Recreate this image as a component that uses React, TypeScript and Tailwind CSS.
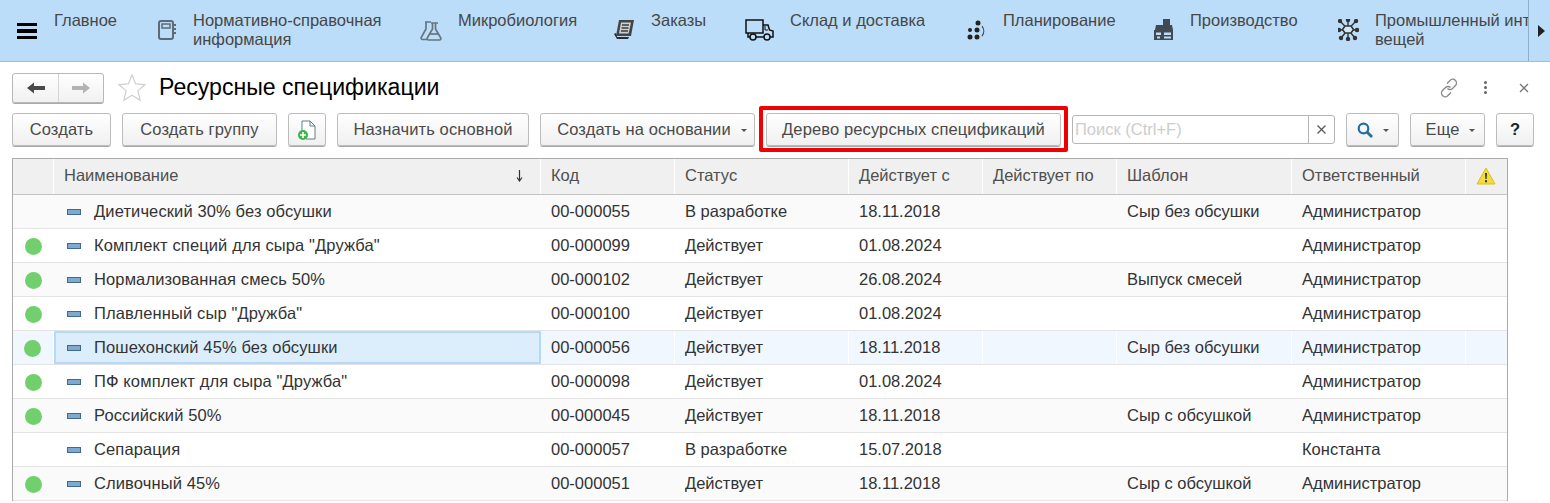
import { ReactNode } from 'react'

const font = { fontFamily: '"Liberation Sans", Arial, sans-serif' }

function NotebookIcon() {
  return (
    <svg width="20" height="22" viewBox="0 0 20 22" fill="none" stroke="#5c6b75" strokeWidth="2">
      <rect x="2" y="2" width="14" height="18" rx="2" />
      <rect x="5" y="5" width="8" height="4" strokeWidth="1.5" />
      <path d="M17 6h2M17 10h2M17 14h2" strokeWidth="2" />
    </svg>
  )
}

function FlaskIcon() {
  return (
    <svg width="22" height="22" viewBox="0 0 22 22" fill="none" stroke="#66757f" strokeWidth="1.700">
      <path d="M5 3h6M6 3v7l-4.500 8a1.500 1.500 0 0 0 1.300 2.500H7" />
      <path d="M11 4h7M12.500 4v6l-5 8.500a1.500 1.500 0 0 0 1.300 2.500h10.400a1.500 1.500 0 0 0 1.300-2.500l-5-8.500V4" />
      <path d="M10 15h8" />
    </svg>
  )
}

function OrderIcon() {
  return (
    <svg width="22" height="22" viewBox="0 0 22 22">
      <path d="M6 1h15l-3 16H3z" fill="#444" />
      <path d="M8 3.500h10l-2.400 11H6z" fill="#c9d0d5" />
      <path d="M9 6h7M8.500 9h7M8 12h7" stroke="#3a3a3a" strokeWidth="1.300" />
      <path d="M1 15l2-1 1 4h12l-1 2H4z" fill="#2b2b2b" />
    </svg>
  )
}

function TruckIcon() {
  return (
    <svg width="29" height="22" viewBox="0 0 29 22" fill="none" stroke="#111" strokeWidth="1.500">
      <rect x="1" y="1" width="17" height="13" fill="none" />
      <path d="M3 14v4h2" />
      <path d="M18 6h5l1.500 5 3.500 1v6h-3" />
      <path d="M20 7v4h3" strokeWidth="1" />
      <circle cx="8" cy="18" r="3" />
      <circle cx="22" cy="18" r="3" />
      <path d="M11 18h8" />
    </svg>
  )
}

function DotsIcon() {
  return (
    <svg width="20" height="22" viewBox="0 0 20 22" fill="#222">
      <circle cx="11" cy="4" r="2.500" />
      <circle cx="3" cy="11" r="2" />
      <circle cx="10" cy="11" r="2.500" />
      <circle cx="3" cy="18" r="2.500" />
      <circle cx="10" cy="18" r="2.500" />
      <path d="M15 7a8 8 0 0 1 0 10" fill="none" stroke="#444" strokeWidth="1.200" />
    </svg>
  )
}

function FactoryIcon() {
  return (
    <svg width="21" height="22" viewBox="0 0 21 22" fill="#414a50">
      <path d="M10 0h7v7h-7z" />
      <path d="M3 6h16l1 5H2z" />
      <path d="M1 11h19v10H1zM3 13.500v2.500h5v-2.500zM11 13.500v2.500h7v-2.500zM4 17.500v2h3v-2zM11 17.500v2h7v-2z" fillRule="evenodd" />
    </svg>
  )
}

function IotIcon() {
  const rays = [
    [2, 2],
    [18, 2],
    [1, 11],
    [19, 11],
    [3, 19],
    [17, 19],
    [10, 1],
    [10, 20],
  ]
  return (
    <svg width="21" height="22" viewBox="0 0 21 22" fill="#333" stroke="#333" strokeWidth="1.400">
      {rays.map(([c, d]) => (
        <g key={`${c}-${d}`}>
          <path d={`M10 10.500L${c} ${d}`} />
          <circle cx={c} cy={d} r="1.500" />
        </g>
      ))}
      <path d="M7 7h6l2.500 3.500L13 14H7l-2.500-3.500z" fill="#d6e6f2" strokeWidth="1.600" />
    </svg>
  )
}

const sections: { label: ReactNode; icon: ReactNode; width: string; iconBox: string }[] = [
  { label: <>Нормативно-справочная<br />информация</>, icon: <NotebookIcon />, width: 'w-[263px]', iconBox: 'w-[36px]' },
  { label: 'Микробиология', icon: <FlaskIcon />, width: 'w-[193px]', iconBox: 'w-[38px]' },
  { label: 'Заказы', icon: <OrderIcon />, width: 'w-[132px]', iconBox: 'w-[38px]' },
  { label: 'Склад и доставка', icon: <TruckIcon />, width: 'w-[222px]', iconBox: 'w-[45px]' },
  { label: 'Планирование', icon: <DotsIcon />, width: 'w-[186px]', iconBox: 'w-[36px]' },
  { label: 'Производство', icon: <FactoryIcon />, width: 'w-[185px]', iconBox: 'w-[37px]' },
  { label: <>Промышленный интернет<br />вещей</>, icon: <IotIcon />, width: 'w-[190px]', iconBox: 'w-[37px]' },
]

function TopBar() {
  return (
    <div className="flex h-[62px] border-b border-[#9fbcd6] bg-[#bbddf9] text-[16.5px] leading-[19px] text-[#474747]">
      <div className="flex w-[54px] shrink-0 items-center pl-[17px]">
        <div className="flex w-5 flex-col gap-[3px] pt-[1px]">
          <span className="h-[3.5px] bg-black" />
          <span className="h-[3.5px] bg-black" />
          <span className="h-[3.5px] bg-black" />
        </div>
      </div>
      <div className="w-[103px] shrink-0 pt-[11px]">Главное</div>
      <div className="flex w-[1371px] shrink-0 overflow-hidden">
        {sections.map((s, i) => (
          <div key={i} className={`flex shrink-0 ${s.width}`}>
            <div className={`shrink-0 pt-[19px] ${s.iconBox}`}>{s.icon}</div>
            <div className="overflow-hidden whitespace-nowrap pt-[11px]">{s.label}</div>
          </div>
        ))}
      </div>
      <div className="flex flex-1 items-center justify-center border-l border-[#8fb0cc]">
        <span className="ml-[3px] h-0 w-0 border-y-[6px] border-l-[7px] border-y-transparent border-l-[#222]" />
      </div>
    </div>
  )
}

function TitleRow() {
  return (
    <div className="mt-[10px] flex h-[31px] items-center px-3">
      <div className="flex h-[30px] w-[92px] rounded-[3px] border border-[#b8b8b8] bg-gradient-to-b from-white to-[#f1f1f1] shadow-[0_1px_0_#aaa]">
        <div className="flex w-[46px] items-center justify-center border-r border-[#d5d5d5]">
          <svg width="18" height="12" viewBox="0 0 18 12" fill="#4a4a4a">
            <path d="M0 6l7-5.500V4h11v4H7v3.500z" />
          </svg>
        </div>
        <div className="flex flex-1 items-center justify-center">
          <svg width="18" height="12" viewBox="0 0 18 12" fill="#b3b3b3">
            <path d="M18 6l-7-5.500V4H0v4h11v3.500z" />
          </svg>
        </div>
      </div>
      <svg className="ml-[13px]" width="30" height="29" viewBox="0 0 30 29" fill="none" stroke="#cfcfcf" strokeWidth="1.200">
        <path d="M15 2l3.700 8.900 9.300.8-7.100 6.200 2.200 9.300L15 22.300l-8.100 4.900 2.200-9.300L2 11.700l9.300-.8z" />
      </svg>
      <h1 className="ml-3 text-[23.1px] leading-none text-black">Ресурсные спецификации</h1>
      <div className="ml-auto flex items-center">
        <svg width="20" height="20" viewBox="0 0 20 20" fill="none" stroke="#8a8a8a" strokeWidth="1.400" className="mr-[25px]">
          <path d="M8 5.500l3-3a3.500 3.500 0 0 1 5.500 5l-3 3a3.500 3.500 0 0 1-5 0" />
          <path d="M12 14.500l-3 3a3.500 3.500 0 0 1-5.500-5l3-3a3.500 3.500 0 0 1 5 0" />
        </svg>
        <div className="mr-[32px] flex flex-col gap-[2px]">
          <span className="h-[3px] w-[3px] rounded-full bg-[#666]" />
          <span className="h-[3px] w-[3px] rounded-full bg-[#666]" />
          <span className="h-[3px] w-[3px] rounded-full bg-[#666]" />
        </div>
        <svg width="10" height="10" viewBox="0 0 10 10" stroke="#777" strokeWidth="1.300" className="mr-[9px]">
          <path d="M1 1l8 8M9 1L1 9" />
        </svg>
      </div>
    </div>
  )
}

function Caret() {
  return <span className="ml-[10px] mt-[1px] h-0 w-0 border-x-[3px] border-t-[3px] border-x-transparent border-t-[#555]" />
}

function Btn({ children, width, className = '' }: { children: ReactNode; width: string; className?: string }) {
  return (
    <button
      className={`relative flex h-[33px] shrink-0 items-center justify-center rounded-[3px] border border-[#bcbcbc] bg-gradient-to-b from-white to-[#f0f0f0] text-[16.5px] tracking-[0.12px] text-[#4a4a4a] shadow-[0_1px_0_#a8a8a8] ${width} ${className}`}
    >
      {children}
    </button>
  )
}

function Toolbar() {
  return (
    <div className="mt-[10px] flex h-[34px] gap-[11px] px-3">
      <Btn width="w-[99px]">Создать</Btn>
      <Btn width="w-[155px]">Создать группу</Btn>
      <Btn width="w-[38px]">
        <svg width="20" height="22" viewBox="0 0 20 22" fill="none">
          <path d="M5 13V2h8l5 5v13H9" stroke="#607d8b" strokeWidth="1" fill="#fff" />
          <path d="M13 2v5h5" stroke="#607d8b" strokeWidth="1" />
          <circle cx="6" cy="16" r="5" fill="#3cb54a" />
          <path d="M3 16h6M6 13v6" stroke="#fff" strokeWidth="1.600" />
        </svg>
      </Btn>
      <Btn width="w-[192px]">Назначить основной</Btn>
      <Btn width="w-[215px]" className="pl-[9px]">
        Создать на основании
        <Caret />
      </Btn>
      <Btn width="w-[295px]">
        Дерево ресурсных спецификаций
        <span className="absolute -inset-x-[8px] -bottom-[7px] -top-[8px] rounded-[2px] border-[4px] border-[#f00000]" />
      </Btn>
      <div className="mt-[2px] flex h-[29px] w-[263px] shrink-0 rounded-[3px] border border-[#b5b5b5] bg-white text-[16.5px]">
        <div className="flex-1 pl-[2px] leading-[27px] text-[#cdcdcd]">Поиск (Ctrl+F)</div>
        <div className="flex w-[26px] items-center justify-center border-l border-[#b5b5b5]">
          <svg width="9" height="9" viewBox="0 0 9 9" stroke="#555" strokeWidth="1.200">
            <path d="M.5.500l8 8M8.500.500l-8 8" />
          </svg>
        </div>
      </div>
      <Btn width="w-[53px]">
        <svg width="16" height="16" viewBox="0 0 16 16" fill="none" stroke="#23709e" strokeWidth="2.200">
          <circle cx="6.500" cy="6.500" r="4.800" />
          <path d="M10 10l5 5" strokeWidth="2.800" />
        </svg>
        <Caret />
      </Btn>
      <Btn width="w-[75px]" className="pl-[6px]">
        Еще
        <Caret />
      </Btn>
      <Btn width="w-[38px]" className="font-bold text-[#222]">?</Btn>
    </div>
  )
}

const columns = [
  { title: '', width: 'w-[41px]' },
  { title: 'Наименование', width: 'w-[487px]' },
  { title: 'Код', width: 'w-[134px]' },
  { title: 'Статус', width: 'w-[174px]' },
  { title: 'Действует с', width: 'w-[134px]' },
  { title: 'Действует по', width: 'w-[134px]' },
  { title: 'Шаблон', width: 'w-[175px]' },
  { title: 'Ответственный', width: 'w-[174px]' },
  { title: '', width: 'flex-1' },
]

const rows = [
  { on: false, name: 'Диетический 30% без обсушки', code: '00-000055', status: 'В разработке', from: '18.11.2018', tpl: 'Сыр без обсушки', owner: 'Администратор' },
  { on: true, name: 'Комплект специй для сыра "Дружба"', code: '00-000099', status: 'Действует', from: '01.08.2024', tpl: '', owner: 'Администратор' },
  { on: true, name: 'Нормализованная смесь 50%', code: '00-000102', status: 'Действует', from: '26.08.2024', tpl: 'Выпуск смесей', owner: 'Администратор' },
  { on: true, name: 'Плавленный сыр "Дружба"', code: '00-000100', status: 'Действует', from: '01.08.2024', tpl: '', owner: 'Администратор' },
  { on: true, name: 'Пошехонский 45% без обсушки', code: '00-000056', status: 'Действует', from: '18.11.2018', tpl: 'Сыр без обсушки', owner: 'Администратор', selected: true },
  { on: true, name: 'ПФ комплект для сыра "Дружба"', code: '00-000098', status: 'Действует', from: '01.08.2024', tpl: '', owner: 'Администратор' },
  { on: true, name: 'Российский 50%', code: '00-000045', status: 'Действует', from: '18.11.2018', tpl: 'Сыр с обсушкой', owner: 'Администратор' },
  { on: false, name: 'Сепарация', code: '00-000057', status: 'В разработке', from: '15.07.2018', tpl: '', owner: 'Константа' },
  { on: true, name: 'Сливочный 45%', code: '00-000051', status: 'Действует', from: '18.11.2018', tpl: 'Сыр с обсушкой', owner: 'Администратор' },
]

function Table() {
  return (
    <div className="mx-3 mt-[11px] w-[1496px] border-x border-t border-[#ababab] text-[16.5px]">
      <div className="flex h-[36px] border-b border-[#c4c4c4] bg-[#f0f0f0] text-[#4f4f4f]">
        {columns.map((c, i) => (
          <div key={i} className={`relative flex items-center border-r border-white pb-[2px] pl-[10px] last:border-r-0 ${c.width}`}>
            {c.title}
            {i === 1 && (
              <svg className="absolute right-[16px] top-[10px]" width="9" height="13" viewBox="0 0 9 13" fill="none" stroke="#333" strokeWidth="1.200">
                <path d="M4.500 1v10M2 8.500l2.500 3.500L7 8.500" />
              </svg>
            )}
            {i === 8 && (
              <svg width="20" height="18" viewBox="0 0 20 18">
                <path d="M10 1l9 16H1z" fill="#f4dc3a" stroke="#d9bd2a" strokeLinejoin="round" />
                <path d="M9 6h2l-.4 6H9.400zM9 13.300h2v2H9z" fill="#333" />
              </svg>
            )}
          </div>
        ))}
      </div>
      {rows.map((r, i) => (
        <div
          key={r.code}
          className={`flex h-[34px] border-b border-[#e4e4e4] text-[#333] ${
            r.selected ? 'bg-[#f0f7fe]' : i % 2 === 0 ? 'bg-[#fafafa]' : 'bg-white'
          }`}
        >
          <div className={`flex w-[41px] shrink-0 items-center justify-center ${r.selected ? 'border-r border-white' : ''}`}>
            {r.on && <span className="mr-[1px] mt-[1px] h-[17px] w-[17px] rounded-full bg-[#72cf6d]" />}
          </div>
          <div
            className={`flex w-[487px] shrink-0 items-center tracking-[0.12px] ${
              r.selected ? 'border-2 border-[#b5d9f6] bg-[#dceefc] pl-[11px]' : 'pl-[13px]'
            }`}
          >
            <span className="mr-[13px] h-[6px] w-[14px] shrink-0 border border-[#44688a] bg-[#7fa9d0]" />
            {r.name}
          </div>
          {[
            [r.code, 'w-[134px]'],
            [r.status, 'w-[174px]'],
            [r.from, 'w-[134px]'],
            ['', 'w-[134px]'],
            [r.tpl, 'w-[175px]'],
            [r.owner, 'w-[174px]'],
            ['', 'flex-1'],
          ].map(([text, width], j) => (
            <div key={j} className={`flex items-center pl-[10px] ${width} ${r.selected ? 'border-r border-white last:border-r-0' : ''}`}>
              {text}
            </div>
          ))}
        </div>
      ))}
    </div>
  )
}

export default function App() {
  return (
    <div className="h-[503px] w-[1550px] overflow-hidden bg-white" style={font}>
      <TopBar />
      <TitleRow />
      <Toolbar />
      <Table />
    </div>
  )
}
